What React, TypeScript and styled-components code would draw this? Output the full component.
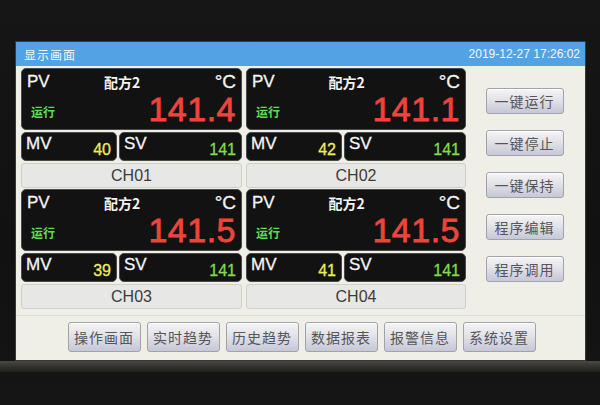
import React from "react";
import styled, { createGlobalStyle } from "styled-components";

const Global = createGlobalStyle`
  html, body { margin: 0; padding: 0; background: #121212; }
  #root { width: 600px; height: 405px; overflow: hidden; }
`;

const CJK = `"Noto Sans CJK SC", "Noto Sans", sans-serif`;
const LATIN = `"Liberation Sans", Arial, sans-serif`;

const Housing = styled.div`
  width: 600px;
  height: 405px;
  box-sizing: border-box;
  padding: 41px 14px 0 15px;
  display: flex;
  flex-direction: column;
  background: linear-gradient(180deg, #161616 0%, #111 60%, #151515 100%);
`;

const Screen = styled.div`
  width: 571px;
  height: 320px;
  display: flex;
  flex-direction: column;
  background: #efeee7;
  border: 1px solid #3a3a38;
  box-sizing: border-box;
`;

const Bezel = styled.div`
  height: 11px;
  margin: 0 -14px 0 -15px;
  background: linear-gradient(180deg, #4a4945 0%, #353430 45%, #22211e 100%);
`;

const TitleBar = styled.div`
  height: 24px;
  flex: none;
  display: flex;
  align-items: center;
  justify-content: space-between;
  padding: 0 5px 0 8px;
  background: #53a2e3;
  color: #f4f8fc;
`;

const TitleText = styled.span`
  font-family: ${CJK};
  font-size: 12px;
  letter-spacing: 1px;
`;

const Clock = styled.span`
  font-family: ${LATIN};
  font-size: 12px;
`;

const Main = styled.div`
  flex: 1;
  display: flex;
  padding: 2px 0 0 5px;
`;

const ChannelGrid = styled.div`
  display: grid;
  grid-template-columns: 221px 220px;
  column-gap: 4px;
  row-gap: 1px;
  align-content: start;
`;

const Channel = styled.div`
  display: flex;
  flex-direction: column;
  gap: 2px;
`;

const DarkBox = styled.div`
  background: #121212;
  border: 1px solid #4a4a4a;
  border-radius: 5px;
  box-sizing: border-box;
  color: #f4f4f4;
`;

const PvBox = styled(DarkBox)`
  height: 62px;
  display: grid;
  grid-template-columns: 1fr auto;
  grid-template-rows: 22px 1fr;
  padding: 2px 5px 4px 5px;
`;

const TopRow = styled.div`
  grid-column: 1 / 3;
  display: flex;
  align-items: center;
  justify-content: space-between;
`;

const Tag = styled.span`
  font-family: ${LATIN};
  font-size: 17px;
  line-height: 20px;
  -webkit-text-stroke: 0.3px currentColor;
`;

const Recipe = styled.span`
  font-family: ${CJK};
  font-size: 14px;
  font-weight: 700;
  margin-right: 20px;
`;

const Unit = styled.span`
  font-family: ${LATIN};
  font-size: 19px;
  line-height: 20px;
  -webkit-text-stroke: 0.3px currentColor;
`;

const Status = styled.span`
  align-self: center;
  font-family: ${CJK};
  font-size: 12px;
  font-weight: 700;
  color: #5fdc52;
  padding: 5px 0 0 4px;
`;

const PvValue = styled.span`
  align-self: end;
  font-family: ${LATIN};
  font-size: 34px;
  line-height: 32px;
  color: #f0433a;
  letter-spacing: 0.5px;
  -webkit-text-stroke: 0.8px currentColor;
`;

const SubRow = styled.div`
  display: grid;
  grid-template-columns: 96px 1fr;
  gap: 2px;
`;

const SubBox = styled(DarkBox)`
  height: 29px;
  display: flex;
  justify-content: space-between;
  padding: 1px 5px 2px 4px;
`;

const SubValue = styled.span<{ $tone: string }>`
  align-self: flex-end;
  font-family: ${LATIN};
  font-size: 16px;
  line-height: 16px;
  color: ${(p) => p.$tone};
  -webkit-text-stroke: 0.3px currentColor;
`;

const ChannelLabel = styled.div`
  height: 25px;
  display: flex;
  align-items: center;
  justify-content: center;
  background: #e7e7e5;
  border: 1px solid #cfcfcb;
  border-radius: 3px;
  box-sizing: border-box;
  font-family: ${LATIN};
  font-size: 16px;
  color: #3c3c3c;
`;

const SideColumn = styled.div`
  flex: 1;
  display: flex;
  flex-direction: column;
  align-items: center;
  gap: 16px;
  padding: 20px 2px 0 0;
`;

const Button = styled.button<{ $w: number; $h: number }>`
  width: ${(p) => p.$w}px;
  height: ${(p) => p.$h}px;
  padding: 0;
  flex: none;
  border: 1px solid #a2a2aa;
  border-radius: 3px;
  background: linear-gradient(180deg, #f5f5f6 0%, #e2e2e8 45%, #c6c7d8 100%);
  box-shadow: inset 0 1px 0 #ffffff;
  font-family: ${CJK};
  font-size: 14px;
  letter-spacing: 1px;
  color: #55555a;
  cursor: pointer;
`;

const NavBar = styled.div`
  height: 45px;
  flex: none;
  display: flex;
  justify-content: center;
  align-items: flex-start;
  gap: 6px;
  padding: 6px 0 0 2px;
  box-sizing: border-box;
  border-top: 1px solid #dcdbd4;
`;

type ChannelData = { id: string; pv: string; mv: string; sv: string };

const channels: ChannelData[] = [
  { id: "CH01", pv: "141.4", mv: "40", sv: "141" },
  { id: "CH02", pv: "141.1", mv: "42", sv: "141" },
  { id: "CH03", pv: "141.5", mv: "39", sv: "141" },
  { id: "CH04", pv: "141.5", mv: "41", sv: "141" },
];

const sideActions = ["一键运行", "一键停止", "一键保持", "程序编辑", "程序调用"];
const navItems = ["操作画面", "实时趋势", "历史趋势", "数据报表", "报警信息", "系统设置"];

function ChannelCard({ data }: { data: ChannelData }) {
  return (
    <Channel>
      <PvBox>
        <TopRow>
          <Tag>PV</Tag>
          <Recipe>配方2</Recipe>
          <Unit>°C</Unit>
        </TopRow>
        <Status>运行</Status>
        <PvValue>{data.pv}</PvValue>
      </PvBox>
      <SubRow>
        <SubBox>
          <Tag>MV</Tag>
          <SubValue $tone="#eeec5a">{data.mv}</SubValue>
        </SubBox>
        <SubBox>
          <Tag>SV</Tag>
          <SubValue $tone="#7fdc4e">{data.sv}</SubValue>
        </SubBox>
      </SubRow>
      <ChannelLabel>{data.id}</ChannelLabel>
    </Channel>
  );
}

export default function App() {
  return (
    <>
      <Global />
      <Housing>
        <Screen>
          <TitleBar>
            <TitleText>显示画面</TitleText>
            <Clock>2019-12-27 17:26:02</Clock>
          </TitleBar>
          <Main>
            <ChannelGrid>
              {channels.map((c) => (
                <ChannelCard key={c.id} data={c} />
              ))}
            </ChannelGrid>
            <SideColumn>
              {sideActions.map((a) => (
                <Button key={a} $w={78} $h={26}>
                  {a}
                </Button>
              ))}
            </SideColumn>
          </Main>
          <NavBar>
            {navItems.map((n) => (
              <Button key={n} $w={73} $h={30}>
                {n}
              </Button>
            ))}
          </NavBar>
        </Screen>
        <Bezel />
      </Housing>
    </>
  );
}
